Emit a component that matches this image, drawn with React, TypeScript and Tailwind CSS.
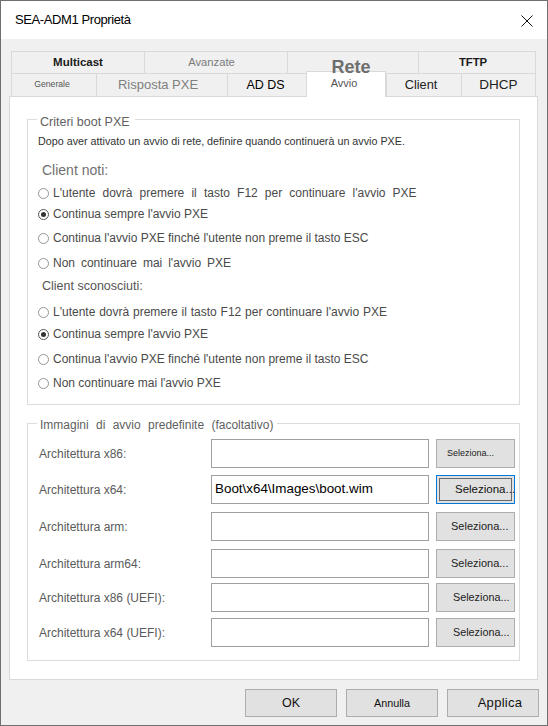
import type { FC } from "react";

type Tab = { label: string; w: string; text: string };

const topTabs: Tab[] = [
  { label: "Multicast", w: "w-[133px]", text: "text-[11.5px] font-bold text-[#1a1a1a]" },
  { label: "Avanzate", w: "w-[143px] pr-[9px]", text: "text-[11.2px] text-[#7a7a7a]" },
  { label: "Rete", w: "w-[131px] pr-[4px]", text: "relative z-20 mt-[9px] text-[18px] font-bold text-[#6e6e6e]" },
  { label: "TFTP", w: "w-[118px] pr-[8px]", text: "text-[11.3px] font-bold text-[#1a1a1a]" },
];

const bottomTabs: Tab[] = [
  { label: "Generale", w: "w-[85px] pr-[4px]", text: "text-[8.7px] text-[#555]" },
  { label: "Risposta PXE", w: "w-[131px] pr-[8px]", text: "text-[13px] text-[#808080]" },
  { label: "AD DS", w: "w-[79px] pr-[3px]", text: "text-[12.5px] text-black" },
  { label: "Avvio", w: "w-[80px]", text: "" },
  { label: "Client", w: "w-[75px] pr-[6px]", text: "text-[12.8px] text-[#222]" },
  { label: "DHCP", w: "w-[75px]", text: "text-[13.5px] text-[#222]" },
];

const Radio: FC<{ checked?: boolean; label: string; className?: string }> = ({
  checked,
  label,
  className = "",
}) => (
  <div className={`flex h-[16px] items-center gap-[4px] pl-[10px] ${className}`}>
    <span
      className={`flex size-[11px] shrink-0 items-center justify-center rounded-full border bg-white ${
        checked ? "border-[#555]" : "border-[#959595]"
      }`}
    >
      {checked && <span className="size-[5px] rounded-full bg-[#333]" />}
    </span>
    <span className="whitespace-nowrap">{label}</span>
  </div>
);

type Row = { label: string; value?: string; btn: string; focus?: boolean; mt: string };

const rows: Row[] = [
  { label: "Architettura x86:", btn: "text-[9px] pl-[10px]", mt: "" },
  { label: "Architettura x64:", value: "Boot\\x64\\Images\\boot.wim", btn: "text-[11.5px] pl-[18px]", focus: true, mt: "mt-[7px]" },
  { label: "Architettura arm:", btn: "text-[11px] pl-[14px]", mt: "mt-[8px]" },
  { label: "Architettura arm64:", btn: "text-[11px] pl-[14px]", mt: "mt-[8px]" },
  { label: "Architettura x86 (UEFI):", btn: "text-[10.8px] pl-[16px]", mt: "mt-[5px]" },
  { label: "Architettura x64 (UEFI):", btn: "text-[10.8px] pl-[16px]", mt: "mt-[6px]" },
];

export default function App() {
  return (
    <div className="flex h-[726px] w-[548px] flex-col border border-[#6f6f6f] bg-[#f0f0f0] font-['Liberation_Sans',Arial,sans-serif]">
      {/* title bar */}
      <div className="flex h-[38px] shrink-0 items-center justify-between bg-white pl-[14px] pr-[14px]">
        <span className="text-[13px] tracking-[-0.4px] text-black">SEA-ADM1 Proprietà</span>
        <svg width="12" height="12" viewBox="0 0 12 12" className="mt-[2px]">
          <path d="M0.5 0.5 L11.5 11.5 M11.5 0.5 L0.5 11.5" stroke="#111" strokeWidth="1" />
        </svg>
      </div>

      <div className="flex flex-1 flex-col pt-[12px]">
        {/* tabs */}
        <div className="ml-[10px] w-[525px]">
          <div className="flex h-[22px]">
            {topTabs.map((t, i) => (
              <div
                key={t.label}
                className={`flex items-center justify-center border-l border-t border-[#d9d9d9] ${t.w} ${
                  i === topTabs.length - 1 ? "border-r" : ""
                }`}
              >
                <span className={`whitespace-nowrap ${t.text}`}>{t.label}</span>
              </div>
            ))}
          </div>
          <div className="flex h-[23px]">
            {bottomTabs.map((t, i) =>
              t.label === "Avvio" ? (
                <div
                  key={t.label}
                  className={`relative z-10 -mt-[2px] flex h-[26px] justify-center border-x border-t border-[#d9d9d9] bg-white pt-[3px] pr-[4px] ${t.w}`}
                >
                  <span className="text-[11px] text-[#555]">{t.label}</span>
                </div>
              ) : (
                <div
                  key={t.label}
                  className={`flex items-center justify-center border-l border-t border-[#d9d9d9] ${t.w} ${
                    i === bottomTabs.length - 1 ? "border-r" : ""
                  }`}
                >
                  <span className={`whitespace-nowrap ${t.text}`}>{t.label}</span>
                </div>
              ),
            )}
          </div>
        </div>

        {/* panel */}
        <div className="ml-[8px] mr-[9px] h-[584px] border border-[#d9d9d9] bg-white px-[17px] pt-[22px]">
          {/* criteri boot */}
          <div className="relative h-[286px] border border-[#dcdcdc] pt-[15px] text-[12px] text-[#4a4a4a]">
            <span className="absolute -top-[5px] left-[9px] bg-white pl-[3px] pr-[5px] text-[12.5px] leading-[14px] text-[#5f5f5f]">
              Criteri boot PXE
            </span>
            <div className="pl-[10px] text-[10.75px] leading-[13px] text-[#333]">
              Dopo aver attivato un avvio di rete, definire quando continuerà un avvio PXE.
            </div>
            <div className="mt-[14px] pl-[14px] text-[14px] leading-[17px] text-[#707070]">Client noti:</div>
            <Radio className="mt-[6px] [word-spacing:3.8px]" label="L'utente dovrà premere il tasto F12 per continuare l'avvio PXE" />
            <Radio className="mt-[5px]" checked label="Continua sempre l'avvio PXE" />
            <Radio className="mt-[8px]" label="Continua l'avvio PXE finché l'utente non preme il tasto ESC" />
            <Radio className="mt-[9px] [word-spacing:2.6px]" label="Non continuare mai l'avvio PXE" />
            <div className="mt-[8px] pl-[14px] text-[12.5px] leading-[15px] text-[#555]">Client sconosciuti:</div>
            <Radio className="mt-[10px] [word-spacing:0.5px]" label="L'utente dovrà premere il tasto F12 per continuare l'avvio PXE" />
            <Radio className="mt-[6px]" checked label="Continua sempre l'avvio PXE" />
            <Radio className="mt-[9px]" label="Continua l'avvio PXE finché l'utente non preme il tasto ESC" />
            <Radio className="mt-[8px]" label="Non continuare mai l'avvio PXE" />
          </div>

          {/* immagini di avvio */}
          <div className="relative mt-[18px] h-[238px] border border-[#dcdcdc] pt-[15px]">
            <span className="absolute -top-[6px] left-[9px] bg-white pl-[3px] pr-[4px] text-[12px] leading-[14px] text-[#5f5f5f] [word-spacing:4px]">
              Immagini di avvio predefinite (facoltativo)
            </span>
            {rows.map((r) => (
              <div key={r.label} className={`flex h-[29px] items-center ${r.mt}`}>
                <div className="w-[183px] pl-[11px] text-[12px] text-[#5a5a5a]">{r.label}</div>
                <div className="flex h-full w-[218px] items-center overflow-hidden border border-[#a0a0a0] bg-white pl-[3px] text-[13.4px] text-black">
                  {r.value}
                </div>
                {r.focus ? (
                  <div className="relative ml-[7px] flex h-full w-[79px] items-center border border-[#0078d7] bg-[#e1e1e1] text-[#111]">
                    <span className="absolute inset-[2px] border border-[#6a6a6a]" />
                    <span className={`relative whitespace-nowrap ${r.btn}`}>Seleziona...</span>
                  </div>
                ) : (
                  <div className="ml-[7px] flex h-full w-[79px] items-center border border-[#adadad] bg-[#e1e1e1] text-[#222]">
                    <span className={`whitespace-nowrap ${r.btn}`}>Seleziona...</span>
                  </div>
                )}
              </div>
            ))}
          </div>
        </div>

        {/* dialog buttons */}
        <div className="mt-[9px] flex justify-end gap-[9px] pr-[8px]">
          <button className="flex h-[28px] w-[92px] items-center justify-center border border-[#adadad] bg-[#e1e1e1] text-[12.5px] text-[#111]">
            OK
          </button>
          <button className="flex h-[28px] w-[92px] items-center justify-center border border-[#adadad] bg-[#e1e1e1] text-[10.8px] text-[#111]">
            Annulla
          </button>
          <button className="flex h-[28px] w-[92px] items-center justify-center border border-[#adadad] bg-[#e1e1e1] pl-[14px] text-[13px] tracking-[0.3px] text-[#111]">
            Applica
          </button>
        </div>
      </div>
    </div>
  );
}
